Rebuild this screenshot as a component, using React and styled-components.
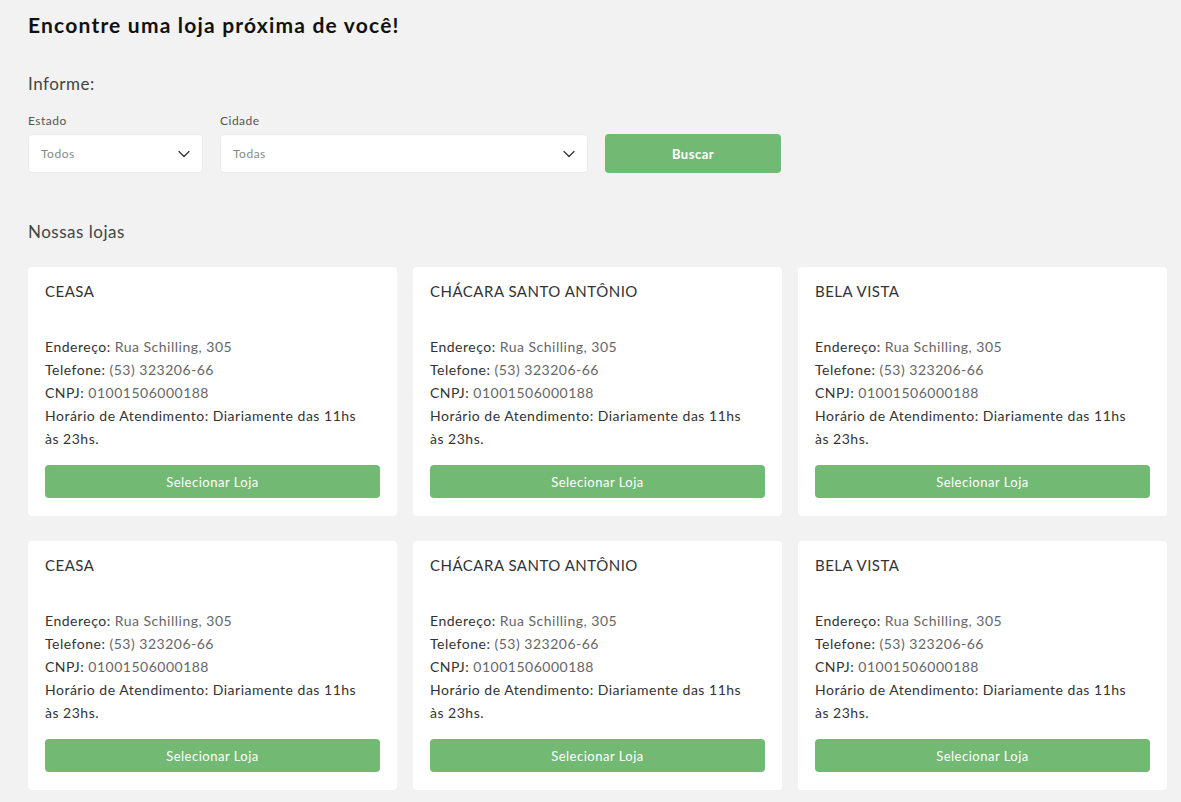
import React from 'react';
import styled, {createGlobalStyle} from 'styled-components';

const GlobalStyle = createGlobalStyle`
  body {
    margin: 0;
    background: #f2f2f2;
    font-family: 'Lato', 'Noto Sans', sans-serif;
    color: #333;
    letter-spacing: 0.5px;
  }
`;

const Page = styled.div`
  padding: 12px 14px 12px 28px;
`;

const Title = styled.h1`
  margin: 0;
  font-size: 21px;
  font-weight: 700;
  color: #111;
  line-height: 26px;
  letter-spacing: 1.2px;
`;

const SectionTitle = styled.h2`
  margin: ${p => p.top}px 0 0;
  font-size: 17px;
  font-weight: 400;
  color: #444;
  line-height: 22px;
`;

const Form = styled.div`
  display: flex;
  align-items: flex-end;
  gap: 17px;
  margin-top: 18px;
`;

const Field = styled.label`
  display: flex;
  flex-direction: column;
  gap: 6px;
  width: ${p => p.width}px;
`;

const Label = styled.span`
  font-size: 12px;
  color: #555;
  line-height: 15px;
`;

const Select = styled.div`
  height: 39px;
  box-sizing: border-box;
  background: #fff;
  border: 1px solid #ebebeb;
  border-radius: 4px;
  display: flex;
  align-items: center;
  justify-content: space-between;
  padding: 0 12px 0 12px;
  font-size: 12px;
  color: #888;
`;

const Button = styled.button`
  border: none;
  border-radius: 4px;
  background: #72b974;
  color: #fff;
  font-family: inherit;
  letter-spacing: 0.5px;
  font-size: 13px;
  font-weight: ${p => p.small ? 400 : 700};
  height: ${p => p.small ? 33 : 39}px;
  width: ${p => p.small ? '100%' : '176px'};
  cursor: pointer;
`;

const Grid = styled.div`
  display: grid;
  grid-template-columns: repeat(3, 369px);
  column-gap: 16px;
  row-gap: 25px;
  margin-top: 24px;
`;

const Card = styled.div`
  background: #fff;
  border-radius: 4px;
  padding: 14px 17px 18px;
  display: flex;
  flex-direction: column;
`;

const StoreName = styled.div`
  font-size: 15px;
  color: #333;
  line-height: 20px;
  text-transform: uppercase;
`;

const Info = styled.div`
  margin: 34px 12px 15px 0;
  font-size: 14px;
  line-height: 23px;
  color: #333;
`;

const Value = styled.span`
  color: #666;
`;

const Chevron = () => (
  <svg width="12" height="8" viewBox="0 0 12 8" fill="none">
    <path d="M1 1.5l5 5 5-5" stroke="#333" strokeWidth="1.3" strokeLinecap="round" strokeLinejoin="round" />
  </svg>
);

const stores = ['CEASA', 'Chácara Santo Antônio', 'Bela Vista', 'CEASA', 'Chácara Santo Antônio', 'Bela Vista'];

const StoreCard = ({name}) =>
  <Card>
    <StoreName>{name}</StoreName>
    <Info>
      <div>Endereço: <Value>Rua Schilling, 305</Value></div>
      <div>Telefone: <Value>(53) 323206-66</Value></div>
      <div>CNPJ: <Value>01001506000188</Value></div>
      <div>Horário de Atendimento: Diariamente das 11hs às 23hs.</div>
    </Info>
    <Button small>Selecionar Loja</Button>
  </Card>;

const App = () =>
  <Page>
    <GlobalStyle />
    <Title>Encontre uma loja próxima de você!</Title>
    <SectionTitle top={35}>Informe:</SectionTitle>
    <Form>
      <Field width={175}>
        <Label>Estado</Label>
        <Select>Todos <Chevron /></Select>
      </Field>
      <Field width={368}>
        <Label>Cidade</Label>
        <Select>Todas <Chevron /></Select>
      </Field>
      <Button>Buscar</Button>
    </Form>
    <SectionTitle top={48}>Nossas lojas</SectionTitle>
    <Grid>
      {stores.map((s, i) => <StoreCard key={i} name={s} />)}
    </Grid>
  </Page>;

export default App;
